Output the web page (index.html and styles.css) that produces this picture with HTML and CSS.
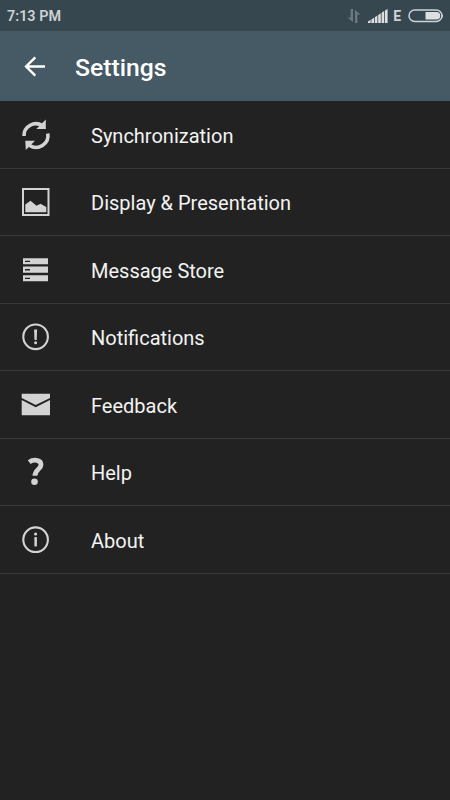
FILE: index.html
```
<!DOCTYPE html>
<html lang="en">
<head>
  <meta charset="UTF-8" />
  <meta name="viewport" content="width=device-width, initial-scale=1.0"/>
  <title>Settings</title>
  <link rel="stylesheet" href="styles.css">
</head>
<body>

  <!-- Status bar -->
  <div class="status-bar">
    <span class="clock">7:13 PM</span>
    <div class="status-icons">
      <svg class="data-icon" width="14" height="14" viewBox="0 0 14 14">
        <path d="M6 0v13L0.5 8.5H3.6V0zM8 14V1l5.5 4.5H10.4V14z"/>
      </svg>
      <svg class="signal-icon" width="20" height="14" viewBox="0 0 20 14">
        <path d="M0 12.5L2.6 10.8V14H0zM3.4 10.4L6 8.7V14H3.4zM6.8 8.2L9.4 6.5V14H6.8zM10.2 5.9l2.6-1.7V14h-2.6zM13.6 3.7l2.6-1.7V14h-2.6zM17 1.5L19.6 0V14H17z"/>
      </svg>
      <span class="network">E</span>
      <svg class="battery-icon" width="36" height="14" viewBox="0 0 36 14">
        <rect x="1" y="1" width="33" height="11.5" rx="5.75"/>
        <path d="M17.5 3H28.5a3.7 3.7 0 0 1 0 7.5H17.5z"/>
        <path d="M34 4.5q1.7 2.2 0 4.5z"/>
      </svg>
    </div>
  </div>

  <!-- Title bar -->
  <header class="app-bar">
    <svg class="back" width="22" height="22" viewBox="0 0 22 22">
      <path d="M11.3 1.4L2.1 10.5l9.2 9.1M2.3 10.5H21"/>
    </svg>
    <h1>Settings</h1>
  </header>

  <!-- Settings list -->
  <ul class="settings">
    <li>
      <svg class="icon" viewBox="0 0 50 50">
        <path class="arc" d="M14 26A11.9 11.9 0 0 1 32.5 15.8M37.8 23.5A11.9 11.9 0 0 1 19.3 35.2"/>
        <path d="M35.8 9.5V19H26.3zM15.3 30.8H25L15.8 40z"/>
      </svg>
      <span>Synchronization</span>
    </li>
    <li>
      <svg class="icon" viewBox="0 0 50 50">
        <path fill-rule="evenodd" d="M12 11h27.5v28H12zM14 13v24h23.5V13z"/>
        <path d="M15.3 35.3V27.5L20.5 23.7 26.5 28.8 30.5 26.8 36.3 30V35.3z"/>
      </svg>
      <span>Display &amp; Presentation</span>
    </li>
    <li>
      <svg class="icon" viewBox="0 0 50 50">
        <path d="M13 13.2h25v6H13zM13 21.5h25v6.2H13zM13 30.2h25v6H13z"/>
        <path class="slot" d="M15 15.7h5v1.3h-5zM15 24.1h5v1.3h-5zM15 32.7h5v1.3h-5z"/>
      </svg>
      <span>Message Store</span>
    </li>
    <li>
      <svg class="icon" viewBox="0 0 50 50">
        <circle class="ring" cx="25.6" cy="24.8" r="12.3"/>
        <path d="M24.1 17.5h3l-.4 10.6h-2.2z"/>
        <circle cx="25.6" cy="30.7" r="1.5"/>
      </svg>
      <span>Notifications</span>
    </li>
    <li>
      <svg class="icon" viewBox="0 0 50 50">
        <path d="M11.7 13.8H40V18.1L25.7 25.1 11.7 18.1zM11.7 20.1L25.7 27.2 40 20.1V35.2H11.7z"/>
      </svg>
      <span>Feedback</span>
    </li>
    <li>
      <svg class="icon" viewBox="0 0 50 50">
        <path class="question" d="M19.2 15.1C23 12.4 31 12.1 31 17.7 31 22.5 25 22.2 25 28.7"/>
        <circle cx="24.5" cy="34.8" r="3.3"/>
      </svg>
      <span>Help</span>
    </li>
    <li>
      <svg class="icon" viewBox="0 0 50 50">
        <circle class="ring" cx="25.6" cy="24.7" r="12.3"/>
        <path d="M24.4 22.1h2.5v9.3h-2.5z"/>
        <circle cx="25.6" cy="19" r="1.6"/>
      </svg>
      <span>About</span>
    </li>
  </ul>

</body>
</html>
```
FILE: styles.css
```
body {
  margin: 0;
  min-height: 100vh;
  font-family: Roboto, "Liberation Sans", sans-serif;
  background: #222;
  color: #f3f3f3;
  overflow: hidden;
}

/* Status bar */
.status-bar {
  display: flex;
  justify-content: space-between;
  align-items: center;
  height: 31px;
  padding: 1px 6px 0 7px;
  box-sizing: border-box;
  background: #37474f;
  color: #cdd2d5;
  font-size: 14px;
  font-weight: 700;
}

.clock {
  font-size: 14.4px;
  font-weight: 600;
}

.status-icons {
  display: flex;
  align-items: center;
}

.status-icons svg {
  fill: #dce0e2;
}

.status-icons .data-icon {
  margin-right: 7px;
  fill: #6c787e;
}

.network {
  margin: 0 7px 0 5px;
}

.battery-icon rect {
  fill: none;
  stroke: #ccd2d5;
  stroke-width: 1.5;
}

/* Title bar */
.app-bar {
  display: flex;
  align-items: center;
  gap: 29px;
  height: 70px;
  padding: 2px 0 0 24px;
  box-sizing: border-box;
  background: #455a64;
}

.back {
  fill: none;
  stroke: #fff;
  stroke-width: 2.4;
}

h1 {
  margin: 0;
  font-size: 24.75px;
  font-weight: 500;
  color: #fff;
}

/* Settings list */
.settings {
  margin: 0;
  padding: 0;
  list-style: none;
}

.settings li {
  display: flex;
  align-items: center;
  gap: 31px;
  height: 67.5px;
  padding: 1px 0 0 10px;
  box-sizing: border-box;
  border-bottom: 1px solid #393939;
  font-size: 20px;
}

.settings span {
  padding-top: 2px;
}

.icon {
  width: 50px;
  height: 50px;
  fill: #d3d3d3;
}

.arc,
.ring,
.question {
  fill: none;
  stroke: #d3d3d3;
}

.arc {
  stroke-width: 3.6;
}

.ring {
  stroke-width: 2.1;
}

.question {
  stroke-width: 4.8;
}

.slot {
  fill: #222;
}
```
